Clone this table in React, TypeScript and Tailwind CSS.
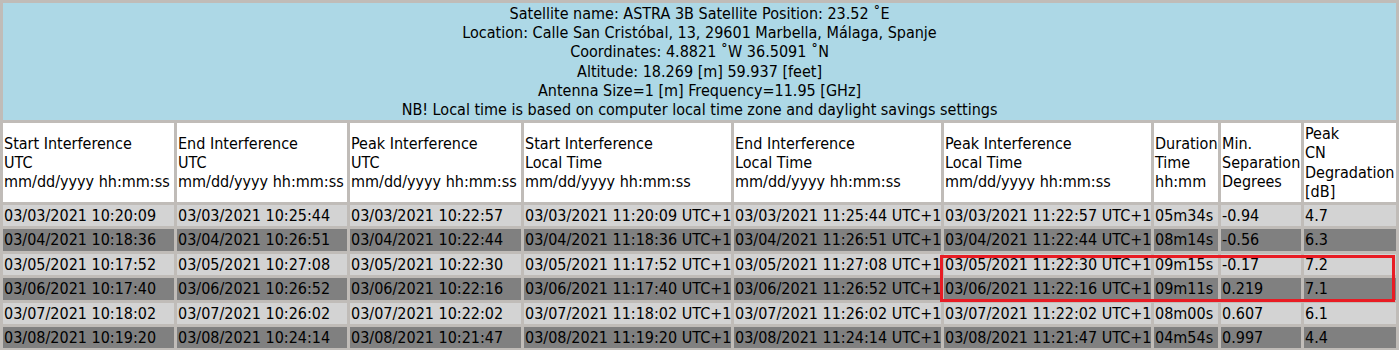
const info = [
  'Satellite name: ASTRA 3B Satellite Position: 23.52 ˚E',
  'Location: Calle San Cristóbal, 13, 29601 Marbella, Málaga, Spanje',
  'Coordinates: 4.8821 ˚W 36.5091 ˚N',
  'Altitude: 18.269 [m] 59.937 [feet]',
  'Antenna Size=1 [m] Frequency=11.95 [GHz]',
  'NB! Local time is based on computer local time zone and daylight savings settings',
];

const headers: string[][] = [
  ['Start Interference', 'UTC', 'mm/dd/yyyy hh:mm:ss'],
  ['End Interference', 'UTC', 'mm/dd/yyyy hh:mm:ss'],
  ['Peak Interference', 'UTC', 'mm/dd/yyyy hh:mm:ss'],
  ['Start Interference', 'Local Time', 'mm/dd/yyyy hh:mm:ss'],
  ['End Interference', 'Local Time', 'mm/dd/yyyy hh:mm:ss'],
  ['Peak Interference', 'Local Time', 'mm/dd/yyyy hh:mm:ss'],
  ['Duration', 'Time', 'hh:mm'],
  ['Min.', 'Separation', 'Degrees'],
  ['Peak', 'CN', 'Degradation', '[dB]'],
];

const widths = ['w-[171px]', 'w-[170px]', 'w-[171px]', 'w-[207px]', 'w-[207px]', 'w-[207px]', 'w-[64px]', 'w-[80px]', 'w-[92px]'];

const rows: string[][] = [
  ['03/03/2021 10:20:09', '03/03/2021 10:25:44', '03/03/2021 10:22:57', '03/03/2021 11:20:09 UTC+1', '03/03/2021 11:25:44 UTC+1', '03/03/2021 11:22:57 UTC+1', '05m34s', '-0.94', '4.7'],
  ['03/04/2021 10:18:36', '03/04/2021 10:26:51', '03/04/2021 10:22:44', '03/04/2021 11:18:36 UTC+1', '03/04/2021 11:26:51 UTC+1', '03/04/2021 11:22:44 UTC+1', '08m14s', '-0.56', '6.3'],
  ['03/05/2021 10:17:52', '03/05/2021 10:27:08', '03/05/2021 10:22:30', '03/05/2021 11:17:52 UTC+1', '03/05/2021 11:27:08 UTC+1', '03/05/2021 11:22:30 UTC+1', '09m15s', '-0.17', '7.2'],
  ['03/06/2021 10:17:40', '03/06/2021 10:26:52', '03/06/2021 10:22:16', '03/06/2021 11:17:40 UTC+1', '03/06/2021 11:26:52 UTC+1', '03/06/2021 11:22:16 UTC+1', '09m11s', '0.219', '7.1'],
  ['03/07/2021 10:18:02', '03/07/2021 10:26:02', '03/07/2021 10:22:02', '03/07/2021 11:18:02 UTC+1', '03/07/2021 11:26:02 UTC+1', '03/07/2021 11:22:02 UTC+1', '08m00s', '0.607', '6.1'],
  ['03/08/2021 10:19:20', '03/08/2021 10:24:14', '03/08/2021 10:21:47', '03/08/2021 11:19:20 UTC+1', '03/08/2021 11:24:14 UTC+1', '03/08/2021 11:21:47 UTC+1', '04m54s', '0.997', '4.4'],
];

export default function App() {
  return (
    <div className="relative w-[1399px] h-[350px] bg-[#c0bcb8] overflow-hidden font-['DejaVu_Sans_Condensed','DejaVu_Sans',sans-serif] text-[16px] leading-[19.2px] text-black">
      <table className="table-fixed w-[1399px] border-separate border-spacing-[3px]">
        <colgroup>
          {widths.map((w, i) => (
            <col key={i} className={w} />
          ))}
        </colgroup>
        <tbody>
          <tr>
            <td colSpan={9} className="bg-[#add8e6] text-center p-px">
              {info.map((line) => (
                <div key={line} className="whitespace-nowrap">{line}</div>
              ))}
            </td>
          </tr>
          <tr>
            {headers.map((h, i) => (
              <td key={i} className="bg-white p-px align-middle text-left font-normal">
                {h.map((l) => (
                  <div key={l} className="whitespace-nowrap">{l}</div>
                ))}
              </td>
            ))}
          </tr>
          {rows.map((r, ri) => (
            <tr key={ri} className={ri % 2 === 0 ? 'bg-[#d3d3d3]' : 'bg-[#808080]'}>
              {r.map((c, ci) => (
                <td key={ci} className="p-px leading-[19.4px] whitespace-nowrap overflow-hidden">
                  {c}
                </td>
              ))}
            </tr>
          ))}
        </tbody>
      </table>

      {/* highlight annotation */}
      <div className="absolute left-[940px] top-[255px] w-[455px] h-[47px] border-[3px] border-[#e81c24] pointer-events-none" />
    </div>
  );
}
